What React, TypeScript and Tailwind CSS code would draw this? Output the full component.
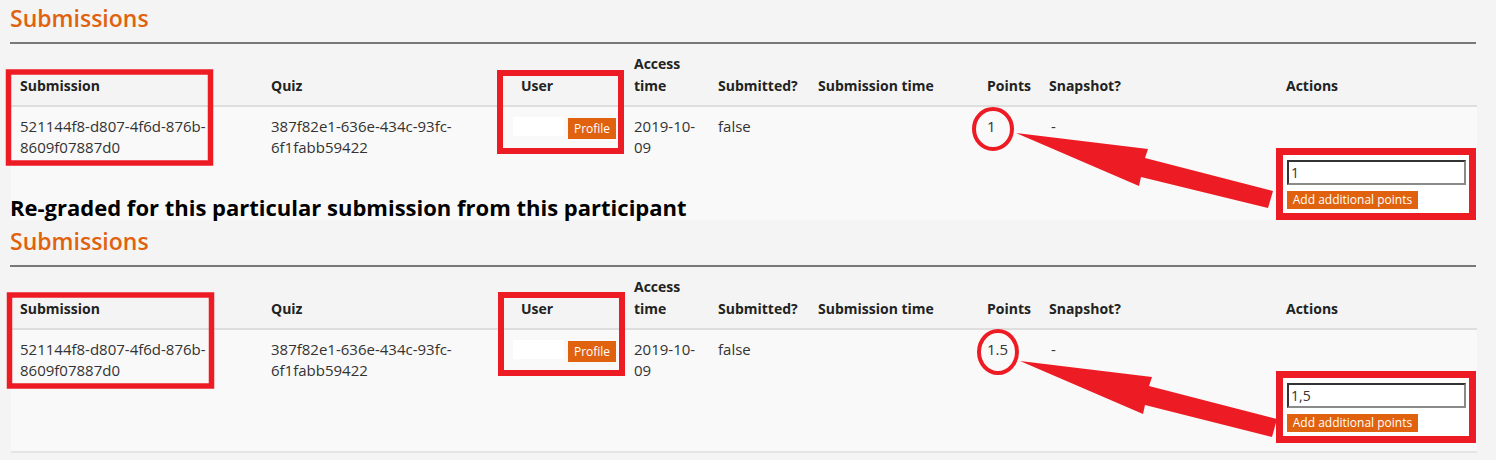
import React from 'react';

const COLS = 'grid w-[1466px] grid-cols-[252px_250px_113px_84px_100px_169px_62px_235px_201px]';

type ShotProps = {
  points: string;
  value: string;
  caption?: string;
  last?: boolean;
};

function HeaderCell({ children, className = '' }: { children: React.ReactNode; className?: string }) {
  return <div className={`pt-[9px] pb-[8px] px-[8px] self-end ${className}`}>{children}</div>;
}

function Screenshot({ points, value, caption, last }: ShotProps) {
  return (
    <div className="w-full">
      <h2 className="px-[10px] pt-[3px] text-[23px] leading-[30px] font-semibold text-[#e0620f]">Submissions</h2>
      <div className="ml-[10px] mt-[9px] h-[2px] w-[1466px] bg-[#787878]" />

      {/* table head */}
      <div className={`${COLS} ml-[11px] border-b-2 border-[#dedede] text-[14px] leading-[22px] font-bold text-[#222]`}>
        <HeaderCell className="pl-[9px]">Submission</HeaderCell>
        <HeaderCell>Quiz</HeaderCell>
        <HeaderCell>User</HeaderCell>
        <HeaderCell>Access time</HeaderCell>
        <HeaderCell className="whitespace-nowrap">Submitted?</HeaderCell>
        <HeaderCell className="whitespace-nowrap">Submission time</HeaderCell>
        <HeaderCell>Points</HeaderCell>
        <HeaderCell>Snapshot?</HeaderCell>
        <HeaderCell className="pl-[10px]">Actions</HeaderCell>
      </div>

      {/* table body */}
      <div
        className={`${COLS} ml-[11px] bg-[#f9f9f9] text-[15px] leading-[21px] text-[#333] ${
          last ? 'min-h-[123px] border-b-2 border-[#e4e4e4]' : ''
        }`}
      >
        <div className="pt-[9px] pl-[9px] pr-[8px]">521144f8-d807-4f6d-876b-8609f07887d0</div>
        <div className="pt-[9px] px-[8px]">387f82e1-636e-434c-93fc-6f1fabb59422</div>
        <div className="pt-[10px] flex items-start gap-[4px]">
          <span className="h-[19px] w-[51px] bg-white" />
          <button className="mt-[1px] h-[21px] w-[48px] bg-[#e0620e] text-white text-[12px] leading-[21px]">Profile</button>
        </div>
        <div className="pt-[9px] px-[8px]">2019-10-09</div>
        <div className="pt-[9px] px-[8px]">false</div>
        <div className="pt-[9px] px-[8px]"></div>
        <div className="pt-[9px] px-[8px]">{points}</div>
        <div className="pt-[9px] px-[10px]">-</div>
        <div className="row-span-2 pt-[41px]">
          <div className="w-[200px] border-[7px] border-[#ed1c24] bg-white pt-[5px] pb-[4px] pl-[4px] pr-[3px]">
            <input
              readOnly
              value={value}
              className="block h-[25px] w-full border-2 border-t-[#333] border-l-[#333] border-b-[#8a8a8a] border-r-[#8a8a8a] bg-white px-[2px] text-[14px] text-[#333] outline-none"
            />
            <button className="mt-[6px] block h-[18px] w-[131px] bg-[#e0620e] text-white text-[12px] leading-[18px]">
              Add additional points
            </button>
          </div>
        </div>
        {caption && (
          <div className="col-span-8 self-end -ml-[1px] text-[22px] leading-[26px] font-bold text-black whitespace-nowrap">
            {caption}
          </div>
        )}
      </div>
    </div>
  );
}

function Annotations() {
  const red = '#ed1c24';
  return (
    <svg className="absolute inset-0 pointer-events-none" width="1496" height="460" viewBox="0 0 1496 460">
      {/* first screenshot */}
      <rect x="8.5" y="72" width="202" height="91" fill="none" stroke={red} strokeWidth="5.5" />
      <rect x="500" y="73" width="121" height="78" fill="none" stroke={red} strokeWidth="6" />
      <ellipse cx="993" cy="129" rx="19" ry="20" fill="none" stroke={red} strokeWidth="4" />
      <polygon fill={red} points="1016,133 1148,149 1145,158 1273,191 1268,208 1141,177 1139,186" />
      {/* second screenshot */}
      <rect x="9.5" y="295" width="202" height="91" fill="none" stroke={red} strokeWidth="5.5" />
      <rect x="501" y="295" width="121" height="78" fill="none" stroke={red} strokeWidth="6" />
      <ellipse cx="998" cy="352" rx="19" ry="21" fill="none" stroke={red} strokeWidth="4" />
      <polygon fill={red} points="1020,361 1152,377 1149,386 1277,419 1272,437 1145,405 1143,414" />
    </svg>
  );
}

export default function App() {
  return (
    <div className="relative w-[1496px] h-[460px] overflow-hidden bg-[#f4f4f4] font-['Open_Sans',sans-serif]">
      <div className="mb-[3px]">
        <Screenshot points="1" value="1" caption="Re-graded for this particular submission from this participant" />
      </div>
      <Screenshot points="1.5" value="1,5" last />
      <Annotations />
    </div>
  );
}
